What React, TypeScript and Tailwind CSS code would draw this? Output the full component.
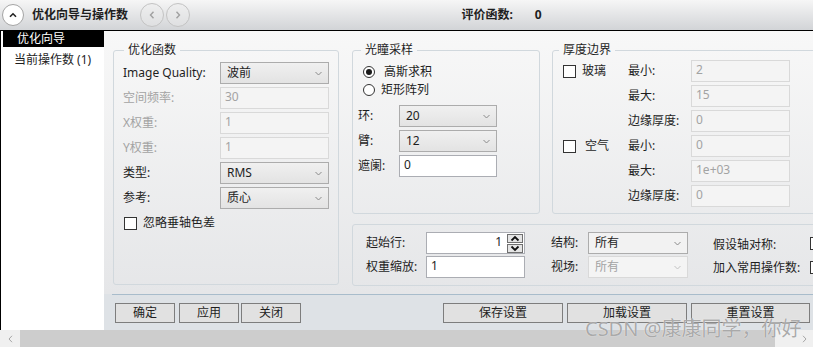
import type { ReactNode } from 'react';
import { twMerge } from 'tailwind-merge';

// Small dropdown arrow used by every combo box
function Caret({ color = '#8a8a8a' }: { color?: string }) {
    return (
        <svg width="7" height="5" viewBox="0 0 7 5" className="shrink-0">
            <path d="M0.5 1 L3.5 4 L6.5 1" fill="none" stroke={color} strokeWidth="1" />
        </svg>
    );
}

function Combo({ value, width, disabled, light }: { value: string; width: string; disabled?: boolean; light?: boolean }) {
    return (
        <div
            className={twMerge(
                'flex h-[22px] items-center justify-between border pl-[6px] pr-[6px]',
                disabled
                    ? 'border-[#d9d9d9] bg-[#f4f4f4] text-[#a3a3a3]'
                    : light
                      ? 'border-[#acacac] bg-[#f2f2f2]'
                      : 'border-[#acacac] bg-gradient-to-b from-[#f0f0f0] to-[#e3e3e3]',
                width
            )}
        >
            <span>{value}</span>
            <Caret color={disabled ? '#c2c2c2' : '#8a8a8a'} />
        </div>
    );
}

function Field({ value, width, disabled }: { value: string; width: string; disabled?: boolean }) {
    return (
        <div
            className={twMerge(
                'h-[22px] border pl-[4px] leading-[17px]',
                disabled ? 'border-[#d9d9d9] bg-[#f4f4f4] text-[#a3a3a3]' : 'border-[#abadb3] bg-white',
                width
            )}
        >
            {value}
        </div>
    );
}

function Check() {
    return <div className="size-[13px] shrink-0 border border-[#333333] bg-white" />;
}

function Radio({ checked }: { checked?: boolean }) {
    return (
        <div className="flex size-[12px] shrink-0 items-center justify-center rounded-full border border-[#333333] bg-white">
            {checked && <div className="size-[6px] rounded-full bg-[#1a1a1a]" />}
        </div>
    );
}

function Group({ title, className, legendClass, children }: { title?: string; className?: string; legendClass?: string; children: ReactNode }) {
    return (
        <fieldset className={twMerge('min-w-0 shrink-0 rounded-[3px] border border-[#d1d8dd]', className)}>
            {title && (
                <legend className={twMerge('ml-[10px] px-[4px] leading-[16px] text-[#1e1e1e]', legendClass)}>{title}</legend>
            )}
            {children}
        </fieldset>
    );
}

function Row({ label, labelWidth, muted, children }: { label: string; labelWidth: string; muted?: boolean; children: ReactNode }) {
    return (
        <div className="flex h-[22px] items-center">
            <span className={twMerge('shrink-0', labelWidth, muted && 'text-[#a3a3a3]')}>{label}</span>
            {children}
        </div>
    );
}

function Btn({ label, width }: { label: string; width: string }) {
    return (
        <div className={twMerge('flex h-[20px] items-center justify-center border border-[#7d7d7d] bg-[#e1e1e1]', width)}>
            {label}
        </div>
    );
}

function CircleBtn({ dir }: { dir: 'left' | 'right' }) {
    return (
        <div className="flex size-[24px] items-center justify-center rounded-full border border-[#c3c3c3] bg-[#ebebeb]/40">
            <svg width="6" height="8" viewBox="0 0 6 8">
                <path
                    d={dir === 'left' ? 'M4.5 0.8 L1.5 4 L4.5 7.2' : 'M1.5 0.8 L4.5 4 L1.5 7.2'}
                    fill="none"
                    stroke="#a0a0a0"
                    strokeWidth="1.4"
                />
            </svg>
        </div>
    );
}

function Spinner() {
    return (
        <div className="flex h-[22px] w-[99px] items-center justify-end border border-[#abadb3] bg-white pr-px">
            <span className="mr-[5px] leading-[17px] self-start">1</span>
            <div className="flex flex-col gap-px">
                {['M1.5 5.5 L5 2 L8.5 5.5', 'M1.5 1.5 L5 5 L8.5 1.5'].map(d => (
                    <div key={d} className="flex h-[9px] w-[16px] items-center justify-center border border-[#707070] bg-[#e5e5e5]">
                        <svg width="10" height="7" viewBox="0 0 10 7">
                            <path d={d} fill="none" stroke="#111" strokeWidth="1.8" />
                        </svg>
                    </div>
                ))}
            </div>
        </div>
    );
}

export default function App() {
    return (
        <div className="relative h-[347px] w-[813px] overflow-hidden bg-white font-['Noto_Sans','Noto_Sans_CJK_SC',sans-serif] text-[12px] text-[#1e1e1e]">
            {/* Cabecera */}
            <div className="flex h-[31px] items-center border-b border-black bg-gradient-to-b from-[#f6f6f6] to-[#d2d4d7]">
                <div className="ml-[2px] flex size-[22px] items-center justify-center rounded-full border border-[#a5a5a5] bg-white">
                    <svg width="8" height="6" viewBox="0 0 8 6">
                        <path d="M1 4.8 L4 1.8 L7 4.8" fill="none" stroke="#222" strokeWidth="1.6" />
                    </svg>
                </div>
                <span className="ml-[8px] font-bold">优化向导与操作数</span>
                <div className="ml-[12px] flex gap-[2px]">
                    <CircleBtn dir="left" />
                    <CircleBtn dir="right" />
                </div>
                <div className="flex flex-1 justify-center font-bold">
                    <span>评价函数:</span>
                    <span className="ml-[22px]">0</span>
                </div>
            </div>

            <div className="flex h-[299px]">
                {/* Navegación */}
                <nav className="w-[104px] shrink-0 border-l border-black bg-white">
                    <div className="ml-[2px] h-[16px] bg-black pl-[14px] leading-[16px] text-white">优化向导</div>
                    <div className="mt-[5px] pl-[13px] leading-[16px]">当前操作数 (1)</div>
                </nav>

                <main className="flex min-w-0 flex-1 flex-col overflow-hidden">
                    <div className="flex h-[263px] flex-col bg-gradient-to-b from-[#f8f8f8] to-[#e5e6e8]">
                        <div className="flex gap-[13px] pl-[9px] pt-[11px]">
                            {/* 优化函数 */}
                            <Group title="优化函数" className="h-[243px] w-[226px]" legendClass="ml-[10px]">
                                <div className="flex flex-col gap-[3px] pl-[9px] pt-[4px]">
                                    <Row label="Image Quality:" labelWidth="w-[97px]">
                                        <Combo value="波前" width="w-[109px]" />
                                    </Row>
                                    <Row label="空间频率:" labelWidth="w-[97px]" muted>
                                        <Field value="30" width="w-[109px]" disabled />
                                    </Row>
                                    <Row label="X权重:" labelWidth="w-[97px]" muted>
                                        <Field value="1" width="w-[109px]" disabled />
                                    </Row>
                                    <Row label="Y权重:" labelWidth="w-[97px]" muted>
                                        <Field value="1" width="w-[109px]" disabled />
                                    </Row>
                                    <Row label="类型:" labelWidth="w-[97px]">
                                        <Combo value="RMS" width="w-[109px]" />
                                    </Row>
                                    <Row label="参考:" labelWidth="w-[97px]">
                                        <Combo value="质心" width="w-[109px]" />
                                    </Row>
                                    <div className="flex h-[22px] items-center pl-px">
                                        <Check />
                                        <span className="ml-[6px]">忽略垂轴色差</span>
                                    </div>
                                </div>
                            </Group>

                            <div className="flex w-[480px] shrink-0 flex-col">
                                <div className="flex gap-[12px]">
                                    {/* 光瞳采样 */}
                                    <Group title="光瞳采样" className="h-[172px] w-[188px]" legendClass="ml-[8px]">
                                        <div className="pl-[10px] pt-[5px]">
                                            <div className="flex h-[18px] items-center">
                                                <Radio checked />
                                                <span className="ml-[9px]">高斯求积</span>
                                            </div>
                                            <div className="flex h-[18px] items-center">
                                                <Radio />
                                                <span className="ml-[6px]">矩形阵列</span>
                                            </div>
                                        </div>
                                        <div className="mt-[6px] flex flex-col gap-[3px] pl-[5px]">
                                            <Row label="环:" labelWidth="w-[41px]">
                                                <Combo value="20" width="w-[98px]" />
                                            </Row>
                                            <Row label="臂:" labelWidth="w-[41px]">
                                                <Combo value="12" width="w-[98px]" />
                                            </Row>
                                            <Row label="遮阑:" labelWidth="w-[41px]">
                                                <Field value="0" width="w-[98px]" />
                                            </Row>
                                        </div>
                                    </Group>

                                    {/* 厚度边界 */}
                                    <Group title="厚度边界" className="h-[172px] w-[280px]" legendClass="ml-[6px]">
                                        <div className="grid grid-cols-[65px_63px_99px] grid-rows-[repeat(6,22px)] items-center gap-y-[3px] pl-[10px] pt-[2px]">
                                            <div className="flex items-center">
                                                <Check />
                                                <span className="ml-[6px]">玻璃</span>
                                            </div>
                                            <span>最小:</span>
                                            <Field value="2" width="w-[99px]" disabled />
                                            <span />
                                            <span>最大:</span>
                                            <Field value="15" width="w-[99px]" disabled />
                                            <span />
                                            <span>边缘厚度:</span>
                                            <Field value="0" width="w-[99px]" disabled />
                                            <div className="flex items-center">
                                                <Check />
                                                <span className="ml-[9px]">空气</span>
                                            </div>
                                            <span>最小:</span>
                                            <Field value="0" width="w-[99px]" disabled />
                                            <span />
                                            <span>最大:</span>
                                            <Field value="1e+03" width="w-[99px]" disabled />
                                            <span />
                                            <span>边缘厚度:</span>
                                            <Field value="0" width="w-[99px]" disabled />
                                        </div>
                                    </Group>
                                </div>

                                {/* Grupo inferior sin título */}
                                <Group className="mt-[10px] h-[62px] w-[480px]">
                                    <div className="flex flex-col gap-[2px] pl-[13px] pt-[7px]">
                                        <div className="flex h-[22px] items-center">
                                            <span className="w-[60px] shrink-0">起始行:</span>
                                            <Spinner />
                                            <span className="ml-[26px] w-[37px] shrink-0">结构:</span>
                                            <Combo value="所有" width="w-[100px]" light />
                                            <span className="ml-[25px] mt-[4px] w-[97px] shrink-0">假设轴对称:</span>
                                            <Check />
                                        </div>
                                        <div className="flex h-[22px] items-center">
                                            <span className="w-[60px] shrink-0">权重缩放:</span>
                                            <Field value="1" width="w-[99px]" />
                                            <span className="ml-[26px] w-[37px] shrink-0">视场:</span>
                                            <Combo value="所有" width="w-[100px]" disabled />
                                            <span className="ml-[25px] mt-[2px] w-[97px] shrink-0">加入常用操作数:</span>
                                            <Check />
                                        </div>
                                    </div>
                                </Group>
                            </div>
                        </div>
                    </div>

                    {/* Separador y botones */}
                    <div className="flex flex-1 flex-col bg-[#dee2e6]">
                        <div className="ml-[8px] h-px bg-[#a8bccb]" />
                        <div className="flex pl-[11px] pr-[3px] pt-[8px]">
                            <div className="flex">
                                <Btn label="确定" width="w-[60px]" />
                                <div className="ml-[4px]">
                                    <Btn label="应用" width="w-[60px]" />
                                </div>
                                <div className="ml-[2px]">
                                    <Btn label="关闭" width="w-[60px]" />
                                </div>
                            </div>
                            <div className="ml-auto flex gap-[4px]">
                                <Btn label="保存设置" width="w-[120px]" />
                                <Btn label="加载设置" width="w-[120px]" />
                                <Btn label="重置设置" width="w-[119px]" />
                            </div>
                        </div>
                    </div>
                </main>
            </div>

            {/* Barra de desplazamiento */}
            <div className="flex h-[17px] bg-[#cdcdcd] text-[#a6a6a6]">
                <div className="flex w-[20px] items-center justify-center bg-[#f0f0f0]">
                    <svg width="5" height="8" viewBox="0 0 5 8">
                        <path d="M4 0.8 L1 4 L4 7.2" fill="none" stroke="#a6a6a6" strokeWidth="1" />
                    </svg>
                </div>
                <div className="flex-1" />
                <div className="flex w-[38px] items-center justify-end bg-[#f0f0f0] pr-[6px]">
                    <svg width="5" height="8" viewBox="0 0 5 8">
                        <path d="M1 0.8 L4 4 L1 7.2" fill="none" stroke="#a6a6a6" strokeWidth="1" />
                    </svg>
                </div>
            </div>

            {/* Marca de agua */}
            <div className="absolute left-[585px] top-[318px] text-[20px] leading-[22px] text-[#8f8f8f]/75 [text-shadow:0_0_1px_#ffffff]">
                CSDN @康康同学，你好
            </div>
        </div>
    );
}
